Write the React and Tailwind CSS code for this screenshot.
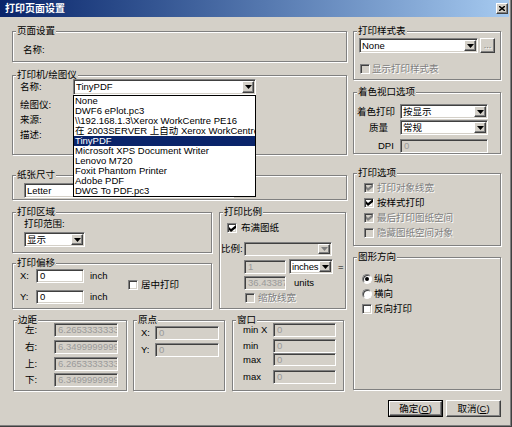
import React from "react";

// classic win9x bevels
const sunken =
  "border border-t-[#808080] border-l-[#808080] border-r-white border-b-white shadow-[inset_1px_1px_0_#404040,inset_-1px_-1px_0_#d4d0c8]";
const raised =
  "border border-t-white border-l-white border-r-[#404040] border-b-[#404040] shadow-[inset_-1px_-1px_0_#808080]";
const dim = "text-[#808080] [text-shadow:1px_1px_0_#fff]";

const Arrow = ({ disabled }) => (
  <svg width="7" height="4" viewBox="0 0 7 4">
    <path d="M0 0h7L3.5 4z" fill={disabled ? "#808080" : "#000"} />
  </svg>
);

function Combo({ value, className = "", disabled }) {
  return (
    <div className={`${sunken} p-px flex ${disabled ? "bg-[#d4d0c8]" : "bg-white"} ${className}`}>
      <span className="flex-1 min-w-0 pl-[1px] flex items-center overflow-hidden whitespace-nowrap">{value}</span>
      <span className={`${raised} w-[12px] shrink-0 bg-[#d4d0c8] flex items-center justify-center`}>
        <Arrow disabled={disabled} />
      </span>
    </div>
  );
}

function Field({ value, className = "", disabled }) {
  return (
    <div
      className={`${sunken} pl-[3px] flex items-center overflow-hidden whitespace-nowrap ${
        disabled ? "bg-[#d4d0c8] text-[#9a9a9a]" : "bg-white"
      } ${className}`}
    >
      {value}
    </div>
  );
}

function Check({ checked, disabled }) {
  return (
    <span
      className={`${sunken} w-[10px] h-[10px] shrink-0 flex items-center justify-center ${
        disabled ? "bg-[#d4d0c8]" : "bg-white"
      }`}
    >
      {checked && (
        <svg width="7" height="7" viewBox="0 0 7 7">
          <path d="M0 2l2 2 5-4v3l-5 4-2-2z" fill={disabled ? "#808080" : "#000"} />
        </svg>
      )}
    </span>
  );
}

function Radio({ checked }) {
  return (
    <span className="w-[10px] h-[10px] shrink-0 rounded-full bg-white border border-t-[#808080] border-l-[#808080] border-r-white border-b-white shadow-[inset_1px_1px_0_#404040] flex items-center justify-center">
      {checked && <span className="w-[4px] h-[4px] rounded-full bg-black" />}
    </span>
  );
}

function Group({ title, className = "", children }) {
  return (
    <div className={`border border-[#808080] shadow-[1px_1px_0_#fff,inset_1px_1px_0_#fff] flex flex-col ${className}`}>
      <div className="-mt-[7px] ml-[3px] self-start px-px bg-[#d4d0c8] leading-[12px] h-[12px] whitespace-nowrap">
        {title}
      </div>
      {children}
    </div>
  );
}

const printers = [
  "None",
  "DWF6 ePlot.pc3",
  "\\\\192.168.1.3\\Xerox WorkCentre PE16",
  "在 2003SERVER 上自动 Xerox WorkCentre PE16",
  "TinyPDF",
  "Microsoft XPS Document Writer",
  "Lenovo M720",
  "Foxit Phantom Printer",
  "Adobe PDF",
  "DWG To PDF.pc3",
];

export default function App() {
  return (
    <div className="w-[512px] h-[427px] bg-[#d4d0c8] font-['Liberation_Sans','Noto_Sans_CJK_SC',sans-serif] text-[9.5px] leading-[12px] text-black border-r border-b border-r-[#404040] border-b-[#404040] shadow-[inset_-1px_-1px_0_#808080] overflow-hidden flex flex-col">
      {/* title bar */}
      <div className="h-[17px] w-[509px] shrink-0 bg-linear-to-r from-[#0a246a] to-[#a6caf0] flex items-center pl-[5px]">
        <span className="text-white font-bold text-[10px]">打印页面设置</span>
        <span className={`${raised} ml-auto mr-[1px] w-[12px] h-[11px] bg-[#d4d0c8] flex items-center justify-center`}>
          <svg width="6" height="5" viewBox="0 0 6 5">
            <path d="M0 0L6 5M6 0L0 5" stroke="#000" strokeWidth="1.4" />
          </svg>
        </span>
      </div>

      <div className="flex pl-[12px] pt-[14px]">
        {/* left column */}
        <div className="w-[335px] flex flex-col">
          <Group title="页面设置" className="h-[31px]">
            <div className="ml-[10px] mt-[7px]">名称:</div>
          </Group>

          <Group title="打印机/绘图仪" className="mt-[13px] h-[80px]">
            <div className="flex items-center -mt-[2px] ml-[7px] h-[16px]">
              <span className="w-[53px]">名称:</span>
              <div className="relative">
                <Combo value="TinyPDF" className="w-[183px] h-[16px]" />
                <div className="absolute left-0 top-full z-10 w-[183px] bg-white border border-black overflow-hidden">
                  {printers.map((p) => (
                    <div
                      key={p}
                      className={`h-[10px] leading-[10px] pl-px whitespace-nowrap ${
                        p === "TinyPDF" ? "bg-[#0a246a] text-white" : ""
                      }`}
                    >
                      {p}
                    </div>
                  ))}
                </div>
              </div>
            </div>
            <div className="ml-[7px] mt-[2px] leading-[15px]">
              <div>绘图仪:</div>
              <div>来源:</div>
              <div>描述:</div>
            </div>
          </Group>

          <Group title="纸张尺寸" className="mt-[20px] h-[25px]">
            <Combo value="Letter" className="mt-[2px] ml-[11px] w-[210px] h-[15px]" />
          </Group>

          <div className="mt-[12px] flex h-[97px]">
            <div className="w-[200px] flex flex-col">
              <Group title="打印区域" className="h-[41px]">
                <div className="ml-[11px]">打印范围:</div>
                <Combo value="显示" className="mt-[2px] ml-[11px] w-[61px] h-[15px]" />
              </Group>
              <Group title="打印偏移" className="mt-[10px] h-[46px]">
                <div className="flex">
                  <div className="w-[108px] ml-[7px] flex flex-col">
                    <div className="flex items-center h-[14px]">
                      <span className="w-[16px]">X:</span>
                      <Field value="0" className="w-[48px] h-[14px]" />
                      <span className="ml-[6px]">inch</span>
                    </div>
                    <div className="flex items-center h-[14px] mt-[7px]">
                      <span className="w-[16px]">Y:</span>
                      <Field value="0" className="w-[48px] h-[14px]" />
                      <span className="ml-[6px]">inch</span>
                    </div>
                  </div>
                  <div className="flex items-center self-start mt-[10px] gap-[3px]">
                    <Check />
                    <span>居中打印</span>
                  </div>
                </div>
              </Group>
            </div>

            <Group title="打印比例" className="ml-[7px] w-[127px] h-[97px]">
              <div className="flex items-center mt-[5px] ml-[7px] gap-[4px] h-[10px]">
                <Check checked />
                <span>布满图纸</span>
              </div>
              <div className="flex items-center mt-[9px] h-[14px]">
                <span className="ml-px w-[23px]">比例:</span>
                <Combo disabled value="" className="w-[88px] h-[14px]" />
              </div>
              <div className="flex items-center mt-[3px] ml-[24px] h-[15px]">
                <Field disabled value="1" className="w-[42px] h-[14px]" />
                <Combo value="inches" className="ml-[3px] w-[44px] h-[15px] tracking-[-0.2px]" />
                <span className="ml-[5px]">=</span>
              </div>
              <div className="flex items-center mt-[2px] ml-[24px] h-[14px]">
                <Field disabled value="36.43387" className="w-[42px] h-[14px] pl-[2px]" />
                <span className="ml-[8px]">units</span>
              </div>
              <div className="flex items-center mt-[3px] ml-[25px] gap-[3px] h-[10px]">
                <Check disabled />
                <span className={dim}>缩放线宽</span>
              </div>
            </Group>
          </div>

          <div className="mt-[11px] flex h-[71px]">
            <Group title="边距" className="ml-px w-[114px] h-full">
              {[
                ["左:", "6.2653333333333", ""],
                ["右:", "6.3499999999999", "mt-[3px]"],
                ["上:", "6.2653333333333", "mt-[3px]"],
                ["下:", "6.3499999999999", "mt-[2px]"],
              ].map(([l, v, m], i) => (
                <div key={i} className={`flex items-center h-[14px] ${i === 0 ? "-mt-[3px]" : m}`}>
                  <span className="ml-[11px] w-[29px]">{l}</span>
                  <Field disabled value={v} className="w-[64px] h-[14px]" />
                </div>
              ))}
            </Group>

            <Group title="原点" className="ml-[6px] w-[92px] h-full">
              <div className="flex items-center h-[14px]">
                <span className="ml-[7px] w-[14px]">X:</span>
                <Field disabled value="0" className="w-[64px] h-[14px]" />
              </div>
              <div className="flex items-center h-[14px] mt-[3px]">
                <span className="ml-[7px] w-[14px]">Y:</span>
                <Field disabled value="0" className="w-[64px] h-[14px]" />
              </div>
            </Group>

            <Group title="窗口" className="ml-[7px] w-[112px] h-full">
              <div className="flex items-center h-[14px] -mt-[3px]">
                <span className="ml-[10px] w-[30px]">min X</span>
                <Field disabled value="0" className="w-[63px] h-[14px]" />
              </div>
              <div className="flex items-center h-[14px] mt-[2px]">
                <span className="ml-[10px] w-[30px]">min</span>
                <Field disabled value="0" className="w-[63px] h-[14px]" />
              </div>
              <div className="flex items-center h-[13px]">
                <span className="ml-[10px] w-[30px]">max</span>
                <Field disabled value="0" className="w-[63px] h-[13px]" />
              </div>
              <div className="flex items-center h-[14px] mt-[4px]">
                <span className="ml-[10px] w-[30px]">max</span>
                <Field disabled value="0" className="w-[63px] h-[14px]" />
              </div>
            </Group>
          </div>
        </div>

        {/* right column */}
        <div className="ml-[6px] w-[148px] flex flex-col">
          <Group title="打印样式表" className="h-[49px]">
            <div className="flex mt-px ml-[5px]">
              <Combo value="None" className="w-[119px] h-[15px]" />
              <span className={`${raised} ml-[2px] w-[15px] h-[15px] bg-[#d4d0c8] flex items-end justify-center pb-[2px] leading-none text-[9px] ${dim}`}>
                ...
              </span>
            </div>
            <div className="flex items-center mt-[10px] ml-[6px] gap-[2px]">
              <Check disabled />
              <span className={dim}>显示打印样式表</span>
            </div>
          </Group>

          <Group title="着色视口选项" className="mt-[12px] h-[62px]">
            <div className="flex items-center mt-[6px] h-[15px]">
              <span className="w-[46px] pl-[3px]">着色打印</span>
              <Combo value="按显示" className="w-[88px] h-[15px]" />
            </div>
            <div className="flex items-center mt-px h-[15px]">
              <span className="w-[46px] pl-[15px]">质量</span>
              <Combo value="常规" className="w-[88px] h-[15px]" />
            </div>
            <div className="flex items-center mt-[4px] h-[14px]">
              <span className="w-[46px] pl-[24px]">DPI</span>
              <Field disabled value="0" className="w-[88px] h-[14px]" />
            </div>
          </Group>

          <Group title="打印选项" className="mt-[19px] h-[73px]">
            <div className="mt-px flex flex-col">
              {[
                ["打印对象线宽", true, true],
                ["按样式打印", true, false],
                ["最后打印图纸空间", true, true],
                ["隐藏图纸空间对象", false, true],
              ].map(([t, c, d]) => (
                <div key={t} className="flex items-center h-[15px] ml-[10px] gap-[3px]">
                  <Check checked={c} disabled={d} />
                  <span className={d ? dim : ""}>{t}</span>
                </div>
              ))}
            </div>
          </Group>

          <Group title="图形方向" className="mt-[11px] h-[133px]">
            <div className="mt-[8px] flex flex-col">
              <div className="flex items-center h-[15px] ml-[8px] gap-[2px]">
                <Radio checked />
                <span>纵向</span>
              </div>
              <div className="flex items-center h-[15px] ml-[8px] gap-[2px]">
                <Radio />
                <span>横向</span>
              </div>
              <div className="flex items-center h-[15px] ml-[8px] gap-[2px]">
                <Check />
                <span>反向打印</span>
              </div>
            </div>
          </Group>

          <div className="mt-[10px] flex justify-end gap-[3px]">
            <div className="w-[55px] h-[17px] border border-black flex">
              <span className={`${raised} flex-1 bg-[#d4d0c8] flex items-center justify-center`}>
                确定(<u>O</u>)
              </span>
            </div>
            <span className={`${raised} w-[55px] h-[17px] bg-[#d4d0c8] flex items-center justify-center`}>
              取消(<u>C</u>)
            </span>
          </div>
        </div>
      </div>
    </div>
  );
}
